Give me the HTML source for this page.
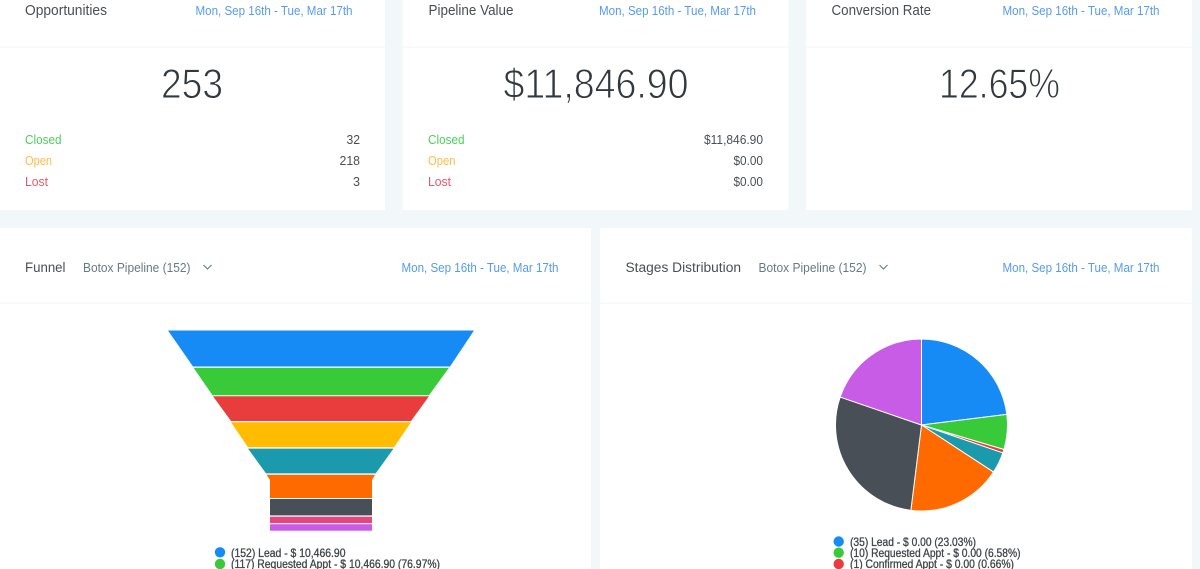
<!DOCTYPE html>
<html lang="en">
<head>
<meta charset="utf-8">
<title>Dashboard</title>
<style>
html,body{margin:0;padding:0;width:1200px;height:569px;overflow:hidden;background:#f2f7fa}
svg{display:block;position:absolute;left:0;top:0}
text{font-family:"Liberation Sans",sans-serif;}
.t{font-size:14.5px;fill:#4a4f55}
.d{font-size:13.2px;fill:#559bec}
.g{font-size:13.2px;fill:#4fce5d}
.o{font-size:13.2px;fill:#ffbc4a}
.r{font-size:13.2px;fill:#e8566a}
.v{font-size:13.2px;fill:#4a4f55}
.b{font-size:41.5px;fill:#33383c;stroke:#fff;stroke-width:.95px}
.f{font-size:14.2px;fill:#4a4f55}
.p{font-size:13.2px;fill:#667a85}
.l{font-size:11.6px;fill:#3f4449;stroke:#3f4449;stroke-width:.3px}
</style>
</head>
<body>
<svg width="1200" height="569" viewBox="0 0 1200 569" xmlns="http://www.w3.org/2000/svg">
<defs><filter id="s" x="-2%" y="-2%" width="104%" height="104%"><feGaussianBlur stdDeviation="0.3"/></filter></defs>
<rect width="1200" height="569" fill="#f2f7fa"/>
<!-- cards -->
<rect x="0" y="0" width="385" height="210" fill="#fff"/>
<rect x="402.5" y="0" width="386" height="210" fill="#fff"/>
<rect x="806" y="0" width="386" height="210" fill="#fff"/>
<rect x="0" y="228" width="591" height="341" fill="#fff"/>
<rect x="600" y="228" width="592" height="341" fill="#fff"/>
<!-- dividers -->
<rect x="0" y="46.5" width="385" height="1.2" fill="#f3f7fa"/>
<rect x="402.5" y="46.5" width="386" height="1.2" fill="#f3f7fa"/>
<rect x="806" y="46.5" width="386" height="1.2" fill="#f3f7fa"/>
<rect x="0" y="302.5" width="591" height="1.2" fill="#f3f7fa"/>
<rect x="600" y="302.5" width="592" height="1.2" fill="#f3f7fa"/>

<g filter="url(#s)">
<!-- top cards text -->
<text class="t" x="25" y="15" textLength="82" lengthAdjust="spacingAndGlyphs">Opportunities</text>
<text class="d" x="195.5" y="15" textLength="157" lengthAdjust="spacingAndGlyphs">Mon, Sep 16th - Tue, Mar 17th</text>
<text class="b" x="161" y="98" textLength="62" lengthAdjust="spacingAndGlyphs">253</text>
<text class="g" x="25" y="144" textLength="36.5" lengthAdjust="spacingAndGlyphs">Closed</text>
<text class="o" x="25" y="165" textLength="27" lengthAdjust="spacingAndGlyphs">Open</text>
<text class="r" x="25" y="186" textLength="23" lengthAdjust="spacingAndGlyphs">Lost</text>
<text class="v" x="346.5" y="144" textLength="13.5" lengthAdjust="spacingAndGlyphs">32</text>
<text class="v" x="339.5" y="165" textLength="20.5" lengthAdjust="spacingAndGlyphs">218</text>
<text class="v" x="353" y="186" textLength="7" lengthAdjust="spacingAndGlyphs">3</text>

<text class="t" x="428.5" y="15" textLength="85" lengthAdjust="spacingAndGlyphs">Pipeline Value</text>
<text class="d" x="599" y="15" textLength="157" lengthAdjust="spacingAndGlyphs">Mon, Sep 16th - Tue, Mar 17th</text>
<text class="b" x="503.5" y="98" textLength="185" lengthAdjust="spacingAndGlyphs">$11,846.90</text>
<text class="g" x="428" y="144" textLength="36.5" lengthAdjust="spacingAndGlyphs">Closed</text>
<text class="o" x="428" y="165" textLength="27.5" lengthAdjust="spacingAndGlyphs">Open</text>
<text class="r" x="428" y="186" textLength="23" lengthAdjust="spacingAndGlyphs">Lost</text>
<text class="v" x="704" y="144" textLength="59" lengthAdjust="spacingAndGlyphs">$11,846.90</text>
<text class="v" x="733.5" y="165" textLength="29.5" lengthAdjust="spacingAndGlyphs">$0.00</text>
<text class="v" x="733.5" y="186" textLength="29.5" lengthAdjust="spacingAndGlyphs">$0.00</text>

<text class="t" x="831.5" y="15" textLength="99.5" lengthAdjust="spacingAndGlyphs">Conversion Rate</text>
<text class="d" x="1002.5" y="15" textLength="157" lengthAdjust="spacingAndGlyphs">Mon, Sep 16th - Tue, Mar 17th</text>
<text class="b" x="939" y="98" textLength="121" lengthAdjust="spacingAndGlyphs">12.65%</text>

<!-- bottom headers -->
<text class="f" x="25" y="272" textLength="40.5" lengthAdjust="spacingAndGlyphs">Funnel</text>
<text class="p" x="83" y="272" textLength="107.5" lengthAdjust="spacingAndGlyphs">Botox Pipeline (152)</text>
<path d="M203.5 265l4 4 4-4" fill="none" stroke="#667a85" stroke-width="1.1"/>
<text class="d" x="401.5" y="272" textLength="157" lengthAdjust="spacingAndGlyphs">Mon, Sep 16th - Tue, Mar 17th</text>

<text class="f" x="625.5" y="272" textLength="115.5" lengthAdjust="spacingAndGlyphs">Stages Distribution</text>
<text class="p" x="758.5" y="272" textLength="108" lengthAdjust="spacingAndGlyphs">Botox Pipeline (152)</text>
<path d="M879.5 265l4 4 4-4" fill="none" stroke="#667a85" stroke-width="1.1"/>
<text class="d" x="1002.5" y="272" textLength="157" lengthAdjust="spacingAndGlyphs">Mon, Sep 16th - Tue, Mar 17th</text>

<!-- funnel -->
<polygon points="168,330.5 474,330.5 450,366.5 193,366.5" fill="#188bf6"/>
<polygon points="193.5,367.7 449,367.7 429,395.2 212.5,395.2" fill="#37ca37"/>
<polygon points="213,396.3 429,396.3 411,421 231,421" fill="#e93d3d"/>
<polygon points="231,422.2 411,422.2 394,447.3 248,447.3" fill="#ffbc00"/>
<polygon points="248,448.6 393.5,448.6 375.7,473.4 266,473.4" fill="#1a9aad"/>
<polygon points="266.5,474.8 375,474.8 372,480 372,498 270,498 270,480" fill="#ff6a00"/>
<rect x="270" y="499" width="102" height="16.4" fill="#4a5056"/>
<rect x="270" y="516.7" width="102" height="6.4" fill="#e6447e"/>
<rect x="270" y="524.2" width="102" height="6.5" fill="#c95ce6"/>

<!-- funnel legend -->
<circle cx="220" cy="552.3" r="5.2" fill="#188bf6"/>
<circle cx="220" cy="564" r="5.2" fill="#37ca37"/>
<text class="l" x="231" y="557" textLength="114.5" lengthAdjust="spacingAndGlyphs">(152) Lead - $ 10,466.90</text>
<text class="l" x="231" y="568" textLength="209" lengthAdjust="spacingAndGlyphs">(117) Requested Appt - $ 10,466.90 (76.97%)</text>

<!-- pie -->
<g stroke="#fff" stroke-width="1" stroke-linejoin="round">
<path d="M921.5 425V339A86 86 0 0 1 1006.84 414.36Z" fill="#188bf6"/>
<path d="M921.5 425L1006.84 414.36A86 86 0 0 1 1003.92 449.54Z" fill="#37ca37"/>
<path d="M921.5 425L1003.92 449.54A86 86 0 0 1 1002.84 452.92Z" fill="#e93d3d"/>
<path d="M921.5 425L1002.84 452.92A86 86 0 0 1 993.5 472.03Z" fill="#1a9aad"/>
<path d="M921.5 425L993.5 472.03A86 86 0 0 1 910.86 510.34Z" fill="#ff6a00"/>
<path d="M921.5 425L910.86 510.34A86 86 0 0 1 840.16 397.08Z" fill="#4a5056"/>
<path d="M921.5 425L840.16 397.08A86 86 0 0 1 921.5 339Z" fill="#c95ce6"/>
</g>

<!-- pie legend -->
<circle cx="838.7" cy="541.5" r="5.2" fill="#188bf6"/>
<circle cx="838.7" cy="552.7" r="5.2" fill="#37ca37"/>
<circle cx="838.7" cy="564" r="5.2" fill="#e93d3d"/>
<text class="l" x="850" y="546" textLength="126" lengthAdjust="spacingAndGlyphs">(35) Lead - $ 0.00 (23.03%)</text>
<text class="l" x="850" y="557" textLength="170.5" lengthAdjust="spacingAndGlyphs">(10) Requested Appt - $ 0.00 (6.58%)</text>
<text class="l" x="850" y="568" textLength="164" lengthAdjust="spacingAndGlyphs">(1) Confirmed Appt - $ 0.00 (0.66%)</text>
</g>
</svg>
</body>
</html>
